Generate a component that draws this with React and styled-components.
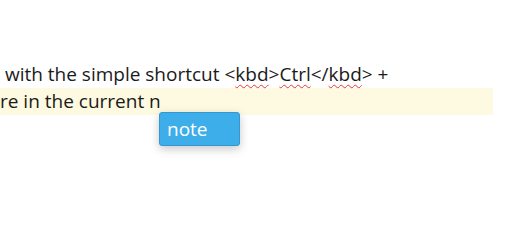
import React from "react";
import styled, { createGlobalStyle } from "styled-components";

const Global = createGlobalStyle`
  html, body {
    margin: 0;
    padding: 0;
    background: #ffffff;
  }
`;

const Editor = styled.div`
  position: relative;
  width: 506px;
  height: 252px;
  overflow: hidden;
  padding-top: 61px;
  box-sizing: border-box;
  font-family: "Open Sans", "Noto Sans", sans-serif;
  font-size: 19px;
  color: #1a1a1a;
`;

const Line = styled.div`
  height: 27px;
  line-height: 27px;
  white-space: pre;
  width: ${(p) => (p.$active ? "493px" : "auto")};
  background: ${(p) => (p.$active ? "#fef9e1" : "transparent")};
`;

const Misspelled = styled.span`
  text-decoration: underline wavy #e8373a;
  text-decoration-thickness: 1px;
  text-underline-offset: 3px;
`;

const Completion = styled.div`
  position: absolute;
  left: 159px;
  top: 112px;
  width: 81px;
  height: 34px;
  box-sizing: border-box;
  padding: 0 7px;
  border-radius: 3px;
  background: #3daee9;
  border: 1px solid #3298cf;
  color: #ffffff;
  line-height: 32px;
  font-size: 19px;
  box-shadow: 0 3px 10px rgba(0, 0, 0, 0.22);
`;

export default function App() {
  return (
    <>
      <Global />
      <Editor>
        <Line>
          {" with the simple shortcut <"}
          <Misspelled>kbd</Misspelled>
          {">"}
          <Misspelled>Ctrl</Misspelled>
          {"</"}
          <Misspelled>kbd</Misspelled>
          {"> +"}
        </Line>
        <Line $active>re in the current n</Line>
        <Completion>note</Completion>
      </Editor>
    </>
  );
}
